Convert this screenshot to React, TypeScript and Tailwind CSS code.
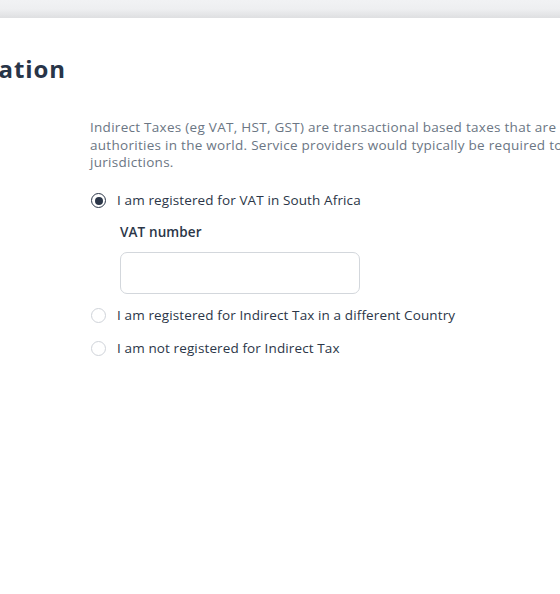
import { useState } from "react";

const options = [
  { id: "za", label: "I am registered for VAT in South Africa" },
  { id: "other", label: "I am registered for Indirect Tax in a different Country" },
  { id: "none", label: "I am not registered for Indirect Tax" },
];

function Radio({ checked }: { checked: boolean }) {
  return (
    <span
      className={`w-[15px] h-[15px] rounded-full border flex items-center justify-center flex-shrink-0 bg-white ${
        checked ? "border-[#2b3648] border-[1.5px]" : "border-[#cfd3d9]"
      }`}
    >
      {checked && <span className="w-[8px] h-[8px] rounded-full bg-[#2b3648]" />}
    </span>
  );
}

export default function App() {
  const [selected, setSelected] = useState("za");
  const [vat, setVat] = useState("");

  return (
    <div
      className="w-[560px] h-[594px] overflow-hidden bg-white text-[#2b3648]"
      style={{ fontFamily: "'Open Sans', Lato, sans-serif" }}
    >
      {/* top bar */}
      <div className="h-[18px] bg-gradient-to-b from-[#f1f2f4] via-[#eeeff1] to-[#dedfe1]" />

      {/* heading, clipped at the left edge */}
      <div className="mt-[36px] w-[66px] overflow-hidden flex justify-end">
        <h1 className="whitespace-nowrap text-[24px] font-bold leading-[30px] tracking-[0.9px] text-[#283548]">
          Tax Information
        </h1>
      </div>

      <div className="ml-[90px] mt-[35px]">
        <p className="whitespace-nowrap text-[13.5px] leading-[17.5px] tracking-[0.28px] text-[#6b7684]">
          Indirect Taxes (eg VAT, HST, GST) are transactional based taxes that are levied by tax
          <br />
          authorities in the world. Service providers would typically be required to be registered in these
          <br />
          jurisdictions.
        </p>

        <div className="mt-[17px] flex flex-col">
          {options.map((o) => (
            <div key={o.id}>
              <label
                className="flex items-center gap-[11px] h-[24px] cursor-pointer"
                onClick={() => setSelected(o.id)}
              >
                <span className="ml-[1px]">
                  <Radio checked={selected === o.id} />
                </span>
                <span className="text-[13.5px] tracking-[0.12px] text-[#2b3648]">{o.label}</span>
              </label>

              {o.id === "za" && selected === "za" && (
                <div className="ml-[30px] mt-[10px] mb-[10px]">
                  <p className="text-[13.5px] font-semibold leading-[18px] tracking-[0.12px] text-[#2b3648]">
                    VAT number
                  </p>
                  <input
                    value={vat}
                    onChange={(e) => setVat(e.target.value)}
                    className="mt-[11px] w-[240px] h-[42px] rounded-[7px] border border-[#d3d7dc] px-3 text-[13.5px] outline-none"
                  />
                </div>
              )}
              {o.id === "other" && <div className="h-[9px]" />}
            </div>
          ))}
        </div>
      </div>
    </div>
  );
}
